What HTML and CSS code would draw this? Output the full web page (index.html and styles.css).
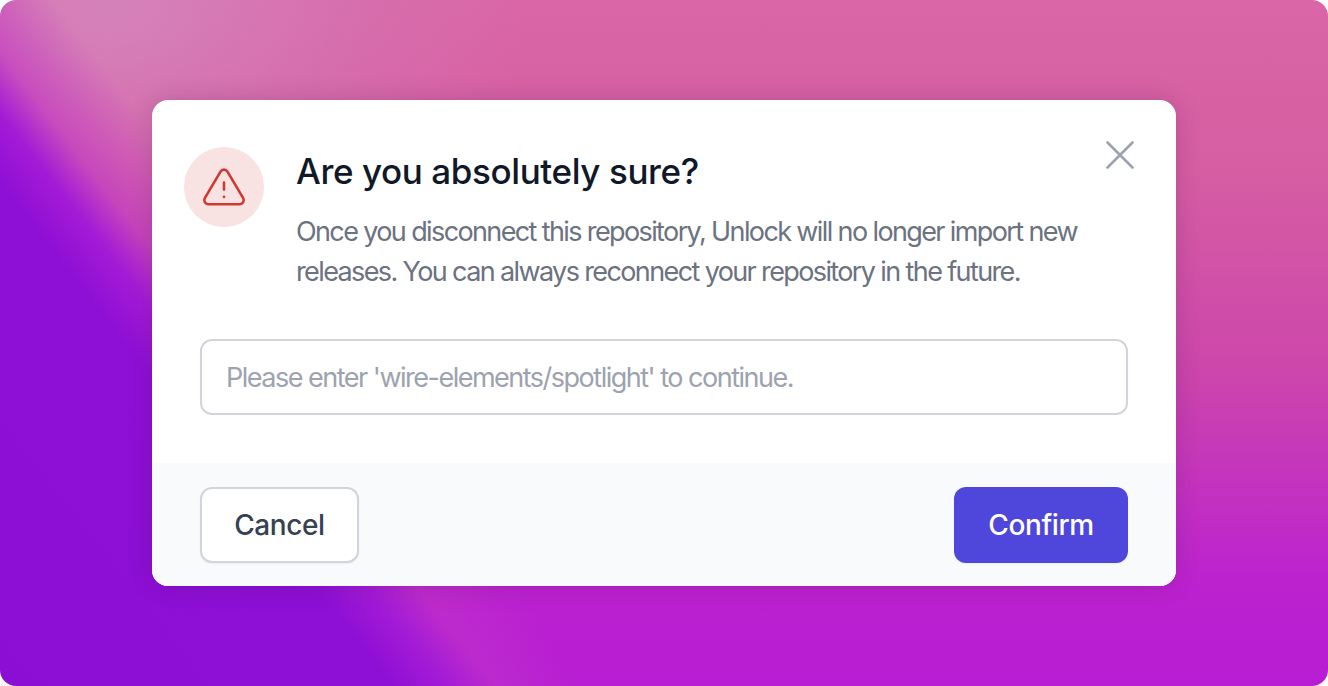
FILE: index.html
```html
<!DOCTYPE html>
<html lang="en">
<head>
<meta charset="utf-8">
<title>Are you absolutely sure?</title>
<link rel="stylesheet" href="styles.css">
</head>
<body>
<main class="backdrop">
  <section class="dialog">
    <button class="close" aria-label="Close">
      <svg viewBox="0 0 28 28" width="28" height="28" fill="none" stroke="currentColor" stroke-width="2.6" stroke-linecap="round"><path d="M1.5 1.5 26.500 26.500M26.500 1.500 1.500 26.500"/></svg>
    </button>
    <div class="body">
      <div class="head">
        <div class="alert">
          <svg viewBox="0 -0.8 24 24" width="48" height="48" fill="none" stroke="currentColor" stroke-width="1.300" stroke-linecap="round" stroke-linejoin="round"><path d="M12 9v3.500M12 16.100v.1M10.270 3.500 2.400 16.800c-.77 1.330.19 3 1.730 3h15.740c1.540 0 2.500-1.670 1.730-3L13.730 3.500c-.77-1.330-2.690-1.330-3.460 0Z"/></svg>
        </div>
        <div class="copy">
          <h1>Are you absolutely sure?</h1>
          <p>Once you disconnect this repository, Unlock will no longer import new releases. You can always reconnect your repository in the future.</p>
        </div>
      </div>
      <input class="field" type="text" placeholder="Please enter 'wire-elements/spotlight' to continue.">
    </div>
    <footer class="foot">
      <button class="btn cancel">Cancel</button>
      <button class="btn confirm">Confirm</button>
    </footer>
  </section>
</main>
</body>
</html>
```
FILE: styles.css
```css
* { box-sizing: border-box; }
html, body { margin: 0; height: 100%; background: #fff; }
body { font-family: Inter, "Liberation Sans", sans-serif; }
.backdrop {
  width: 1328px;
  height: 686px;
  border-radius: 16px;
  overflow: hidden;
  display: flex;
  align-items: flex-start;
  justify-content: center;
  padding-top: 100px;
  background:
    linear-gradient(52deg, #8c0ed4 0, #8e0fd5 21%, #a41bd6 24%, rgba(190,50,200,.6) 26.500%, rgba(200,70,190,0) 31.500%),
    radial-gradient(420px 280px at 110px 10px, rgba(212,135,190,.85), rgba(212,125,185,.35) 60%, rgba(212,120,180,0)),
    linear-gradient(180deg, #d966a6 0, #d65da2 25%, #cc45ac 55%, #bc22cf 85%, #b81dd4 100%);
}
.dialog {
  position: relative;
  width: 1024px;
  height: 486px;
  background: #fff;
  border-radius: 16px;
  overflow: hidden;
  display: flex;
  flex-direction: column;
  justify-content: space-between;
  box-shadow: 0 0 24px rgba(60, 20, 70, .2);
}
.close {
  position: absolute;
  top: 41px;
  right: 42px;
  padding: 0;
  display: flex;
  border: 0;
  background: none;
  color: #9ca3af;
}
.body { padding: 47px 48px 0 32px; }
.head { display: flex; gap: 32px; }
.alert {
  flex: none;
  width: 80px;
  height: 80px;
  border-radius: 50%;
  background: #f8e2e2;
  color: #cf3a30;
  display: flex;
  align-items: center;
  justify-content: center;
}
.copy h1 {
  margin: 2px 0 0;
  font-size: 35px;
  line-height: 44px;
  font-weight: 500;
  letter-spacing: -.4px;
  color: #111827;
}
.copy p {
  margin: 19px 0 0;
  font-size: 27px;
  line-height: 40px;
  letter-spacing: -1.620px;
  color: #6b7280;
}
.field {
  display: block;
  width: 928px;
  height: 76px;
  margin: 47px 0 0 16px;
  padding: 0 24px;
  border: 2px solid #d1d5db;
  border-radius: 12px;
  font: 27px Inter, "Liberation Sans", sans-serif;
  letter-spacing: -1.500px;
  background: #fff;
}
.field::placeholder { color: #9ca3af; opacity: 1; }
.foot {
  height: 123px;
  padding: 24px 48px 0;
  background: #f9fafb;
  display: flex;
  justify-content: space-between;
  align-items: flex-start;
}
.btn {
  height: 76px;
  border-radius: 12px;
  font: 500 28px Inter, "Liberation Sans", sans-serif;
  letter-spacing: -.4px;
  box-shadow: 0 1px 2px rgba(0,0,0,.05);
}
.cancel { width: 159px; border: 2px solid #d1d5db; background: #fff; color: #374151; }
.confirm { width: 174px; border: 0; background: #4f46dc; color: #fff; }
```
